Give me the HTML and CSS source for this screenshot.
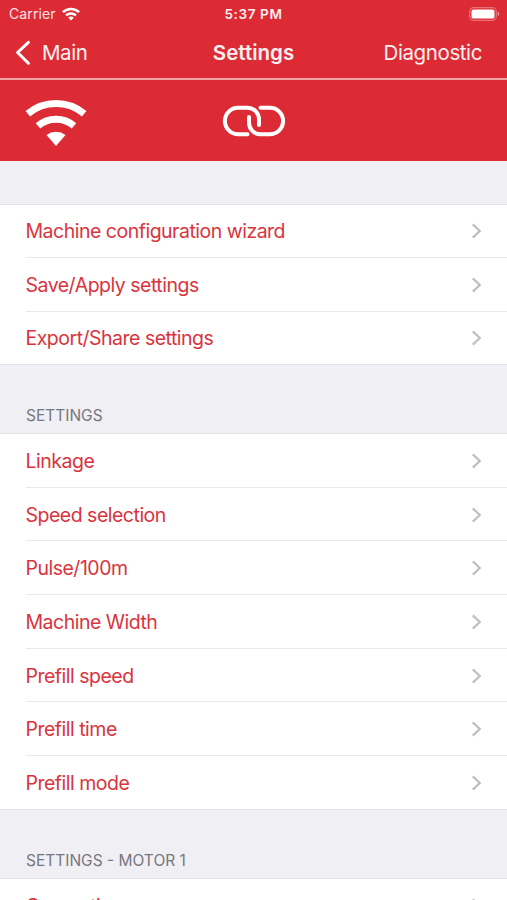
FILE: index.html
```html
<!DOCTYPE html>
<html lang="en">
<head>
<meta charset="utf-8">
<title>Settings</title>
<link rel="stylesheet" href="styles.css">
</head>
<body>
<svg class="symbols" aria-hidden="true"><symbol id="chevron" viewBox="0 0 11 16"><path d="M1.8 1.4 8.8 8l-7 6.6" fill="none" stroke="#bfbfc3" stroke-width="2.2"/></symbol></svg>
<div class="screen">
  <header class="top">
    <div class="status">
      <div class="carrier"><span>Carrier</span>
        <svg width="18" height="14" viewBox="0 0 18 14" fill="none" stroke="#fff" stroke-width="2.5"><path d="M.9 5.1a11.8 11.8 0 0 1 16.2 0M4 8.4a7.5 7.5 0 0 1 10 0"/><path d="M9 13.6 6.2 10.8a4.2 4.2 0 0 1 5.6 0Z" fill="#fff" stroke="none"/></svg>
      </div>
      <div class="clock">5:37 PM</div>
      <svg class="battery" width="31" height="14" viewBox="0 0 31 14"><rect x=".7" y=".7" width="26.6" height="12.6" rx="4" fill="none" stroke="#ea737a" stroke-width="1.2"/><rect x="2.5" y="2.4" width="23" height="9.2" rx="2.2" fill="#fff"/><path d="M28.7 4.8c2 .6 2 3.8 0 4.4Z" fill="#f0959a"/></svg>
    </div>
    <nav class="nav">
      <a class="back"><svg width="16" height="26" viewBox="0 0 16 26"><path d="M13.4 2.3 2.6 12.5l10.8 10.7" fill="none" stroke="#fff" stroke-width="3" stroke-linecap="round" stroke-linejoin="round"/></svg><span>Main</span></a>
      <h1>Settings</h1>
      <a class="diagnostic">Diagnostic</a>
    </nav>
  </header>
  <div class="connection">
    <svg class="wifi" width="62" height="48" viewBox="0 0 62 48" fill="none" stroke="#fff" stroke-width="7"><path d="M2.8 14.7a44 44 0 0 1 56.4 0M13 26.9a28 28 0 0 1 36 0"/><path d="M31 47 21.5 36a16 16 0 0 1 19 0Z" fill="#fff" stroke="none"/></svg>
    <svg class="link" width="64" height="32" viewBox="0 0 64 32" fill="none" stroke="#fff" stroke-width="4" stroke-linecap="round"><path d="M25.5 29.3H16.2a13.3 13.3 0 0 1 0-26.6H25.5A11.5 11.5 0 0 1 37 14.2V20"/><path d="M38.5 2.7H47.8a13.3 13.3 0 0 1 0 26.6H38.5A11.5 11.5 0 0 1 27 17.8V12"/></svg>
  </div>
  <main>
    <div class="gap"></div>
    <ul class="actions">
      <li><span>Machine configuration wizard</span><svg><use href="#chevron"/></svg></li>
      <li><span>Save/Apply settings</span><svg><use href="#chevron"/></svg></li>
      <li><span>Export/Share settings</span><svg><use href="#chevron"/></svg></li>
    </ul>
    <h2>SETTINGS</h2>
    <ul>
      <li><span>Linkage</span><svg><use href="#chevron"/></svg></li>
      <li><span>Speed selection</span><svg><use href="#chevron"/></svg></li>
      <li><span>Pulse/100m</span><svg><use href="#chevron"/></svg></li>
      <li><span>Machine Width</span><svg><use href="#chevron"/></svg></li>
      <li><span>Prefill speed</span><svg><use href="#chevron"/></svg></li>
      <li><span>Prefill time</span><svg><use href="#chevron"/></svg></li>
      <li><span>Prefill mode</span><svg><use href="#chevron"/></svg></li>
    </ul>
    <h2>SETTINGS - MOTOR 1</h2>
    <ul class="motor">
      <li><span>Gear ratio</span><svg><use href="#chevron"/></svg></li>
    </ul>
  </main>
</div>
</body>
</html>
```
FILE: styles.css
```css
* { box-sizing: border-box; }
body {
  margin: 0;
  font-family: Inter, "Liberation Sans", sans-serif;
  background: #efeff4;
}
.symbols { display: none; }
.screen { height: 900px; overflow: hidden; }
.top {
  height: 80px;
  background: #dc2b35;
  border-bottom: 2px solid #f5a3a7;
  color: #fff;
}
.status {
  height: 27px;
  display: grid;
  grid-template-columns: 1fr auto 1fr;
  align-items: center;
  padding: 0 7px 0 9px;
  font-size: 14px;
}
.carrier { display: flex; align-items: center; gap: 6px; color: #fde3e4; letter-spacing: .1px; }
.clock {
  margin-left: -2px;
  font-weight: 600;
  font-size: 13.5px;
  letter-spacing: .6px;
  color: #fff0f0;
}
.battery { justify-self: end; }
.nav {
  height: 51px;
  display: grid;
  grid-template-columns: 1fr auto 1fr;
  align-items: center;
  padding: 0 25px 0 15px;
  font-size: 20.5px;
  letter-spacing: -.4px;
  color: #fff0f0;
}
.nav h1 { margin: 0 -5px 0 5px; font-size: 20.5px; font-weight: 600; letter-spacing: 0; }
.back { display: flex; align-items: center; gap: 11px; }
.diagnostic { justify-self: end; }
.connection {
  height: 81px;
  background: #dc2b35;
  display: grid;
  grid-template-columns: 1fr auto 1fr;
  align-items: center;
  padding: 1px 25px 0;
}
.wifi { margin-top: 4px; }
.gap { height: 43px; }
ul {
  margin: 0;
  padding: 0;
  list-style: none;
  background: #fff;
  border-top: 1px solid #e3e3e7;
  border-bottom: 1px solid #e3e3e7;
}
li {
  height: 53.7px;
  margin-left: 26px;
  padding: 1px 25px 0 0;
  display: flex;
  align-items: center;
  justify-content: space-between;
  border-bottom: 1px solid #e9e9eb;
  font-size: 19.5px;
  letter-spacing: -.5px;
  color: #d9343d;
}
li:last-child { border-bottom: 0; height: 52.7px; }
.actions li { height: 53.4px; padding-top: 0; }
.actions li:last-child { height: 52.2px; padding-top: 1px; }
.motor li:last-child { padding-top: 2px; }
li svg { width: 11px; height: 16px; }
li span { margin-left: -.5px; }
h2 {
  margin: 0;
  height: 68px;
  padding: 0 26px 8px;
  display: flex;
  align-items: flex-end;
  font-size: 15.5px;
  line-height: 19px;
  font-weight: 400;
  color: #77777c;
}
```
